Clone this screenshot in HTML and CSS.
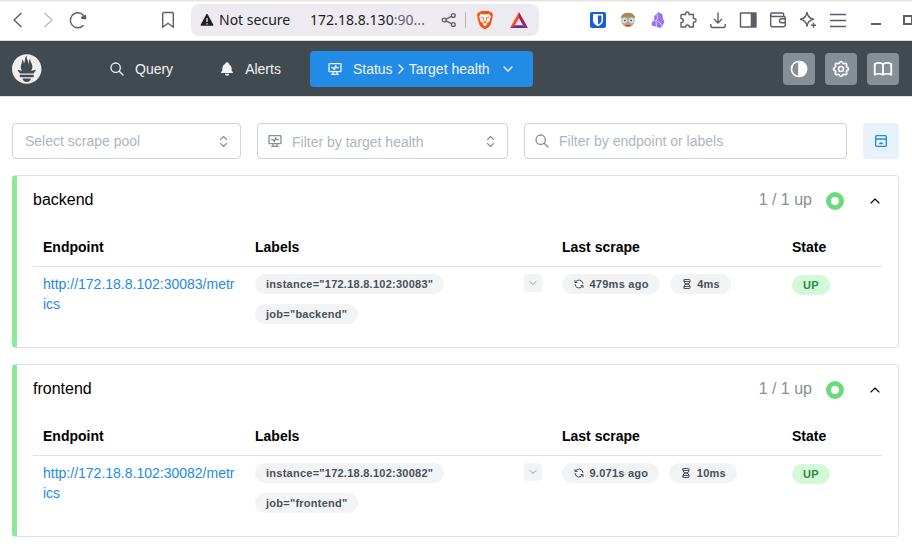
FILE: index.html
```
<!DOCTYPE html>
<html lang="en">
<head>
<meta charset="utf-8">
<title>Prometheus - Target health</title>
<link rel="stylesheet" href="styles.css">
</head>
<body>
<svg class="defs" aria-hidden="true">
  <symbol id="search" viewBox="0 0 24 24"><path d="M3 10a7 7 0 1 0 14 0a7 7 0 1 0-14 0M21 21l-6-6"/></symbol>
  <symbol id="monitor" viewBox="0 0 24 24"><path d="M3 5a1 1 0 0 1 1-1h16a1 1 0 0 1 1 1v10a1 1 0 0 1-1 1H4a1 1 0 0 1-1-1zM7 20h10M9 16v4M15 16v4M7 10h2l2 3l2-6l1 3h3"/></symbol>
  <symbol id="down" viewBox="0 0 24 24"><path d="M6 9l6 6l6-6"/></symbol>
  <symbol id="up" viewBox="0 0 24 24"><path d="M6 15l6-6l6 6"/></symbol>
  <symbol id="selector" viewBox="0 0 15 15"><path d="M4.500 5.500l3-3l3 3M4.500 9.500l3 3l3-3"/></symbol>
  <symbol id="refresh" viewBox="0 0 24 24"><path d="M20 11A8.1 8.1 0 0 0 4.500 9M4 5v4h4M4 13a8.1 8.1 0 0 0 15.500 2M20 19v-4h-4"/></symbol>
  <symbol id="hourglass" viewBox="0 0 24 24"><path d="M6.500 7h11M6.500 17h11M6 20v-2a6 6 0 1 1 12 0v2a1 1 0 0 1-1 1H7a1 1 0 0 1-1-1zM6 4v2a6 6 0 1 0 12 0V4a1 1 0 0 0-1-1H7a1 1 0 0 0-1 1z"/></symbol>
</svg>

<header class="toolbar">
  <svg class="glyph back" width="20" height="20" viewBox="0 0 20 20"><path d="M13.500 3L6 10l7.500 7"/></svg>
  <svg class="glyph forward" width="20" height="20" viewBox="0 0 20 20"><path d="M6.500 3l7.500 7l-7.500 7"/></svg>
  <svg class="glyph" width="20" height="20" viewBox="0 0 20 20"><path d="M15.500 15.200A7.500 7.500 0 1 1 17 8"/><path class="solid" d="M17.500 4.500q1 1 .8 4.500-3 .5-5-.3-1-2 1.500-2.700 1.700 0 2.700-1.500z"/></svg>
  <svg class="glyph bookmark" width="20" height="20" viewBox="0 0 20 20"><path d="M4.700 3.800q0-1.300 1.300-1.300h8q1.300 0 1.300 1.300v13.400L10 13.300l-5.300 3.900z"/></svg>
  <div class="address">
    <svg width="14" height="14" viewBox="0 0 14 14"><path d="M7 1.700L12.700 12H1.300z" fill="#202124" stroke="#202124" stroke-width="1.500" stroke-linejoin="round"/><path d="M7 5v4M7 10.200v1.300" stroke="#edebf0" stroke-width="1.300"/></svg>
    <span class="secure">Not secure</span>
    <span class="url">172.18.8.130<span class="port">:90...</span></span>
    <svg class="glyph share" width="16" height="16" viewBox="0 0 16 16"><circle cx="3.200" cy="8" r="1.900"/><circle cx="12.300" cy="3.500" r="1.900"/><circle cx="12.300" cy="12.500" r="1.900"/><path d="M5 7.100l5.500-2.700M5 8.900l5.500 2.700"/></svg>
    <i class="rule"></i>
    <svg class="brave" width="18" height="20" viewBox="0 0 18 20"><path d="M5 1h8l1.300 1.500 1.500-.2L17 5l-.6 1.600.2 1-2 7.200-1.400 1.900L9 19.500l-4.200-2.800-1.400-1.900-2-7.200.2-1L1 5l1.200-2.700 1.500.2z" fill="#fb4f0b"/><path d="M5 3.800l4 .8 4-.8 2 2.600-1.300 3.400.2 1.300-2.700 2.200-.4 1.700L9 16.300 7.200 15l-.4-1.700-2.700-2.200.2-1.300L3 6.400z" fill="#fff"/><path d="M4.800 7.200l2.900.8M13.200 7.200l-2.900.8M8 7.800l-.7 3L9 11.900l1.700-1.100-.7-3M6.800 13.400L9 12.300l2.200 1.100" fill="none" stroke="#fb4f0b" stroke-width=".8"/></svg>
    <svg class="bat" width="20" height="18" viewBox="0 0 20 18"><path d="M10 1L1 17l5-2.800 4-7.200z" fill="#ff4724"/><path d="M10 1l9 16-5-2.800L10 7z" fill="#9e1f63"/><path d="M1 17h18l-5-2.800H6z" fill="#662d91"/></svg>
  </div>
  <div class="extensions">
    <svg width="20" height="20" viewBox="0 0 20 20"><rect x="2" y="2" width="16" height="16" rx="2" fill="#175ddc"/><path d="M5 4h10v6.500c0 2.800-2.300 4.500-5 5.800-2.700-1.300-5-3-5-5.800z" fill="#fff"/><path d="M10 5.500h3.500v5c0 1.800-1.500 3-3.500 4.100z" fill="#175ddc"/></svg>
    <svg width="20" height="20" viewBox="0 0 20 20"><ellipse cx="10" cy="10.500" rx="6.500" ry="6.700" fill="#cf936d"/><path d="M2.700 8.500q.6-5.700 7.300-5.700t7.300 5.700q-3-2-7.300-2t-7.300 2z" fill="#a58a5c"/><circle cx="6.500" cy="10.500" r="2.800" fill="#e6f3f2" stroke="#a9c4c4"/><circle cx="13.500" cy="10.500" r="2.800" fill="#e6f3f2" stroke="#a9c4c4"/><circle cx="6.800" cy="10.500" r="1.100" fill="#35667a"/><circle cx="13.200" cy="10.500" r="1.100" fill="#35667a"/><path d="M8 15.500h4" stroke="#8c4c3a"/></svg>
    <svg width="20" height="20" viewBox="0 0 20 20"><path d="M10.500 2l4 2.600.4 4 1.600 3.200-2.600 5-2 1.200-4-1.500-3.900-.7L3.600 13l2.600-3-.1-3.700z" fill="#9873f7"/><path d="M6.300 9.800q3 2 2.100 6.800M8.300 11q2-3 .8-7M8.700 11.200q3.500-.2 5.500 5" fill="none" stroke="#e0d5ff" stroke-width=".9"/></svg>
    <svg class="glyph" width="20" height="20" viewBox="0 0 20 20"><path d="M4 4.500h3.700q-.5-2.500 1.600-2.500t1.600 2.500h4.500v4q2.600-.3 2.600 1.800t-2.600 1.800v4.900h-4q0-2-1.900-2t-1.900 2H3v-4.500q2.300 0 2.300-2T3 8.500V5.500q0-1 1-1z"/></svg>
    <svg class="glyph" width="20" height="20" viewBox="0 0 20 20"><path d="M10 2.500v10M6 9l4 4 4-4M2.700 14v1.500q0 2 2 2h10.600q2 0 2-2V14"/></svg>
    <svg class="glyph" width="20" height="20" viewBox="0 0 20 20"><rect x="2.500" y="3" width="15.500" height="14"/><path class="solid" d="M12.700 3h5.300v14h-5.300z"/></svg>
    <svg class="glyph" width="20" height="20" viewBox="0 0 20 20"><path d="M15.700 6V4.300q0-1.300-1.300-1.300H4.300Q2.700 3 2.700 4.500v10.200q0 2 2 2h10.600q2 0 2-2V8q0-1.500-1.500-1.500H4.500q-1.800 0-1.800-1.700M17.300 8.800h-3.600q-2.200 0-2.200 2t2.200 2h3.600"/></svg>
    <svg class="glyph" width="20" height="20" viewBox="0 0 20 20"><path d="M9 2.500q1 5.500 6.500 6.800Q10 10.500 9 16 8 10.500 2.500 9.300 8 8 9 2.500zM15.500 12.800v5M13 15.300h5"/></svg>
    <svg class="glyph" width="20" height="20" viewBox="0 0 20 20"><path d="M2 4.500h16M2 10.500h16M2 16.500h16"/></svg>
  </div>
  <i class="minimize"></i>
  <i class="maximize"></i>
</header>

<nav class="navbar">
  <svg class="logo" width="30" height="30" viewBox="0 0 115.333 114"><path fill="#eee" d="M56.667.667C25.372.667 0 26.036 0 57.332c0 31.295 25.372 56.666 56.667 56.666 31.295 0 56.666-25.371 56.666-56.666 0-31.296-25.372-56.665-56.666-56.665zm0 106.055c-8.904 0-16.123-5.948-16.123-13.283H72.790c0 7.334-7.219 13.283-16.123 13.283zM83.297 89.040H30.034V79.382H83.298V89.040zM83.106 74.411H30.186C30.010 74.208 29.830 74.008 29.660 73.802 24.208 67.182 22.924 63.726 21.677 60.204c-.021-.116 6.611 1.355 11.314 2.413 0 0 2.420.560 5.958 1.205-3.397-3.982-5.414-9.044-5.414-14.218 0-11.359 8.712-21.285 5.569-29.308 3.059.249 6.331 6.456 6.552 16.161 3.252-4.494 4.613-12.701 4.613-17.733 0-5.210 3.433-11.262 6.867-11.469-3.061 5.045.793 9.370 4.219 20.099 1.285 4.030 1.121 10.812 2.113 15.113C63.797 33.534 65.333 20.500 71 16c-2.500 5.667.370 12.758 2.333 16.167 3.167 5.500 5.087 9.667 5.087 17.548 0 5.284-1.951 10.259-5.242 14.148 3.742-.702 6.326-1.335 6.326-1.335l12.152-2.371c0 0-1.765 7.261-8.550 14.254z"/></svg>
  <a class="link query"><svg class="icon" width="16" height="16"><use href="#search"/></svg>Query</a>
  <a class="link alerts"><svg width="16" height="16" viewBox="0 0 24 24" fill="currentColor"><path d="M14.235 19c.865 0 1.322 1.024.745 1.668A4 4 0 0 1 12 22a4 4 0 0 1-2.980-1.332c-.552-.616-.158-1.579.634-1.661L9.765 19zM12 2c1.358 0 2.506.903 2.875 2.141l.046.171.008.043a8.013 8.013 0 0 1 4.024 6.069l.028.287L19 11v2.931l.021.136a3 3 0 0 0 1.143 1.847l.167.117.162.099c.860.487.560 1.766-.377 1.864L20 18H4c-1.028 0-1.387-1.364-.493-1.870a3 3 0 0 0 1.472-2.063L5 13.924V11a8 8 0 0 1 3.821-6.454l.248-.146.010-.043a3 3 0 0 1 2.562-2.330l.182-.017z"/></svg>Alerts</a>
  <a class="link status"><svg class="icon" width="16" height="16"><use href="#monitor"/></svg><span>Status</span><svg class="icon crumb" width="14" height="16" viewBox="1.500 0 21 24"><path d="M9 6l6 6-6 6"/></svg><span>Target health</span><svg class="icon caret" width="16" height="16"><use href="#down"/></svg></a>
  <div class="actions">
    <button><svg class="icon" width="20" height="20" viewBox="0 0 24 24"><circle cx="12" cy="12" r="9"/><path d="M12 3a9 9 0 0 1 0 18z" fill="currentColor"/></svg></button>
    <button><svg class="icon" width="20" height="20" viewBox="0 0 24 24"><path d="M10.325 4.317c.426-1.756 2.924-1.756 3.350 0a1.724 1.724 0 0 0 2.573 1.066c1.543-.940 3.310.826 2.370 2.370a1.724 1.724 0 0 0 1.065 2.572c1.756.426 1.756 2.924 0 3.350a1.724 1.724 0 0 0-1.066 2.573c.940 1.543-.826 3.310-2.370 2.370a1.724 1.724 0 0 0-2.572 1.065c-.426 1.756-2.924 1.756-3.350 0a1.724 1.724 0 0 0-2.573-1.066c-1.543.940-3.310-.826-2.370-2.370a1.724 1.724 0 0 0-1.065-2.572c-1.756-.426-1.756-2.924 0-3.350a1.724 1.724 0 0 0 1.066-2.573c-.940-1.543.826-3.310 2.370-2.370 1 .608 2.296.070 2.572-1.065z"/><circle cx="12" cy="12" r="3"/></svg></button>
    <button><svg class="icon" width="22" height="20" viewBox="0 0 24 24" preserveAspectRatio="none"><path d="M3 19a9 9 0 0 1 9 0a9 9 0 0 1 9 0M3 6a9 9 0 0 1 9 0a9 9 0 0 1 9 0M3 6v13M12 6v13M21 6v13"/></svg></button>
  </div>
</nav>

<main>
  <div class="filters">
    <div class="field pool"><span>Select scrape pool</span><svg class="icon" width="15" height="15"><use href="#selector"/></svg></div>
    <div class="field health"><svg class="icon lead" width="16" height="16"><use href="#monitor"/></svg><span>Filter by target health</span><svg class="icon" width="15" height="15"><use href="#selector"/></svg></div>
    <div class="field endpoint"><svg class="icon lead" width="16" height="16"><use href="#search"/></svg><span>Filter by endpoint or labels</span></div>
    <button class="collapse"><svg class="icon" width="16" height="16" viewBox="0 0 24 24"><path d="M4 5.500a1.500 1.500 0 0 1 1.500-1.500h13a1.500 1.500 0 0 1 1.500 1.500v13a1.500 1.500 0 0 1-1.500 1.500h-13a1.500 1.500 0 0 1-1.500-1.500zM4 9h16M10 16l2-1.500l2 1.500z"/></svg></button>
  </div>

  <section class="card">
    <div class="head"><h2>backend</h2><span class="count">1 / 1 up</span><i class="ring"></i><svg class="icon" width="16" height="16"><use href="#up"/></svg></div>
    <table>
      <thead><tr><th class="c1">Endpoint</th><th class="c2">Labels</th><th class="c3">Last scrape</th><th>State</th></tr></thead>
      <tbody><tr>
        <td><a>http://172.18.8.102:30083/metrics</a></td>
        <td><div class="labels"><div class="list"><span class="badge">instance="172.18.8.102:30083"</span><span class="badge">job="backend"</span></div><button class="more"><svg class="icon" width="12" height="12"><use href="#down"/></svg></button></div></td>
        <td><div class="scrape"><span class="badge"><svg class="icon" width="12" height="12"><use href="#refresh"/></svg>479ms ago</span><span class="badge"><svg class="icon" width="12" height="12"><use href="#hourglass"/></svg>4ms</span></div></td>
        <td><span class="badge state">UP</span></td>
      </tr></tbody>
    </table>
  </section>

  <section class="card">
    <div class="head"><h2>frontend</h2><span class="count">1 / 1 up</span><i class="ring"></i><svg class="icon" width="16" height="16"><use href="#up"/></svg></div>
    <table>
      <thead><tr><th class="c1">Endpoint</th><th class="c2">Labels</th><th class="c3">Last scrape</th><th>State</th></tr></thead>
      <tbody><tr>
        <td><a>http://172.18.8.102:30082/metrics</a></td>
        <td><div class="labels"><div class="list"><span class="badge">instance="172.18.8.102:30082"</span><span class="badge">job="frontend"</span></div><button class="more"><svg class="icon" width="12" height="12"><use href="#down"/></svg></button></div></td>
        <td><div class="scrape"><span class="badge"><svg class="icon" width="12" height="12"><use href="#refresh"/></svg>9.071s ago</span><span class="badge"><svg class="icon" width="12" height="12"><use href="#hourglass"/></svg>10ms</span></div></td>
        <td><span class="badge state">UP</span></td>
      </tr></tbody>
    </table>
  </section>
</main>
</body>
</html>
```
FILE: styles.css
```
* { box-sizing: border-box; }
body { margin: 0; width: 912px; height: 544px; overflow: hidden; background: #fff; color: #000; font: 14px/20px "Liberation Sans", sans-serif; }
button { border: 0; padding: 0; display: flex; align-items: center; justify-content: center; }
svg { flex: none; display: block; }
.defs { display: none; }
.icon { fill: none; stroke: currentColor; stroke-width: 2; stroke-linecap: round; stroke-linejoin: round; }

.toolbar { height: 41px; display: flex; align-items: center; padding-left: 8px; border-bottom: 1px solid #dcdbe0; box-shadow: inset 0 1px #e4e3e1, inset 0 2px 1px #f3f2f1; overflow: hidden; }
.glyph { fill: none; stroke: #5b5e66; stroke-width: 1.400; stroke-linejoin: round; }
.glyph .solid { fill: #5b5e66; stroke: none; }
.forward { margin: 0 10px; stroke: #b9babd; }
.bookmark { margin-left: 70px; }
.address { flex: none; width: 348px; height: 32px; margin-left: 13px; padding-left: 9px; display: flex; align-items: center; background: #edebf0; border-radius: 8px; font-family: "Noto Sans", sans-serif; color: #202124; white-space: nowrap; }
.secure { width: 91px; margin-left: 5px; }
.url { width: 131px; letter-spacing: .03px; }
.port { color: #5f6068; }
.share { stroke-width: 1.300; }
.rule { width: 1px; height: 16px; margin: 0 10px 0 8px; background: #b5b4bb; }
.bat { margin-left: 15px; }
.extensions { flex: none; display: flex; gap: 10px; margin-left: 49px; }
.minimize { flex: none; width: 10px; height: 2px; margin: 7px 0 0 23px; background: #5b5e66; }
.maximize { flex: none; width: 10px; height: 10px; margin-left: 22px; border: 2px solid #5b5e66; }

.navbar { height: 56px; display: flex; align-items: center; padding: 0 13px 0 12px; background: #424a51; color: #f1f3f5; border-bottom: 1px solid #dee2e6; }
.link { height: 36px; display: flex; align-items: center; border-radius: 4px; }
.link > svg:first-child { margin-right: 10px; }
.query { margin-left: 67px; }
.alerts { margin-left: 46px; }
.status { width: 223px; margin-left: 29px; padding-left: 17px; background: #228be6; }
.crumb { margin: 0 1px; }
.caret { margin-left: 10px; }
.actions { display: flex; gap: 10px; margin-left: auto; }
.actions button { width: 32px; height: 32px; border-radius: 4px; background: #868e96; color: #fff; }

main { padding: 26px 13px 0 12px; }
.filters { display: flex; gap: 16px; margin-bottom: 16px; }
.field { height: 36px; display: flex; align-items: center; padding: 0 9px 0 12px; border: 1px solid #ced4da; border-radius: 4px; color: #adb5bd; }
.field span { flex: 1; }
.field .icon { color: #868e96; stroke-width: 1.100; }
.field .lead { margin-right: 9px; stroke-width: 2; }
.pool { width: 229px; }
.health { width: 251px; padding-left: 9px; }
.health span { padding-top: 1px; }
.endpoint { width: 323px; padding-left: 9px; }
.collapse { width: 36px; height: 36px; border-radius: 4px; background: #e7f2fc; color: #228be6; }

.card { height: 173px; margin-bottom: 16px; padding: 0 15px 0 16px; border: 1px solid #dee2e6; border-left: 5px solid #8ce99a; border-radius: 4px; }
.head { height: 51px; display: flex; align-items: center; padding-bottom: 2px; font-size: 16px; }
.head h2 { flex: 1; margin: 0; padding-bottom: 1px; font-size: 16px; font-weight: 400; }
.count { padding-bottom: 1px; color: #868e96; }
.ring { width: 18px; height: 18px; margin: 0 23px 0 14px; border: 5px solid #69db7c; border-radius: 50%; }
.head .icon { stroke-width: 1.700; }
table { width: 849px; table-layout: fixed; border-collapse: collapse; }
th { height: 39px; padding: 1px 10px 0; text-align: left; border-bottom: 1px solid #dee2e6; }
td { padding: 7px 10px; vertical-align: top; }
.c1 { width: 212px; }
.c2 { width: 307px; }
.c3 { width: 230px; }
td a { color: #228be6; overflow-wrap: anywhere; word-break: break-all; }
.labels { display: flex; justify-content: space-between; }
.list { display: flex; flex-direction: column; align-items: flex-start; gap: 10px; }
.more { width: 18px; height: 18px; border-radius: 4px; background: #f1f3f5; color: #999; }
.scrape { display: flex; gap: 10px; }
.badge { height: 20px; display: inline-flex; align-items: center; padding: 0 11px; border-radius: 10px; background: #f1f3f5; color: #495057; font-size: 11px; font-weight: 700; letter-spacing: .25px; white-space: nowrap; }
.badge .icon { margin-right: 4.500px; }
.state { margin-top: 1px; background: #d3f9d8; color: #2b8a3e; }
```
